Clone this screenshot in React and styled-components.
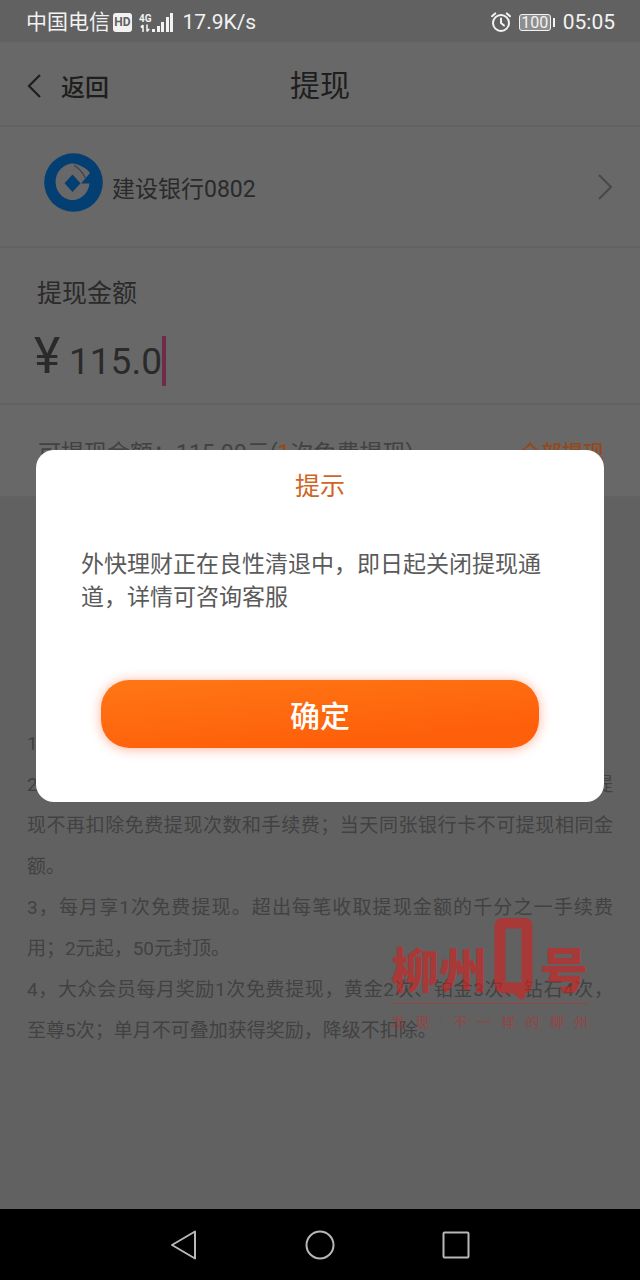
import React, { useState } from 'react'
import styled, { createGlobalStyle, ThemeProvider } from 'styled-components'

const theme = {
    statusBar: '#616161',
    surface: '#686868',
    page: '#616161',
    divider: '#626262',
    ink: '#1e1e1e',
    text: '#2a2a2a',
    muted: '#424242',
    orange: '#984718',
    caret: '#702c46',
    bankBlue: '#043f73',
    accent: '#d0651f',
    stamp: '#d72020',
}

const GlobalStyle = createGlobalStyle`
    * {
        box-sizing: border-box;
    }
    body {
        margin: 0;
        background: #000;
        font-family: Roboto, "Noto Sans CJK SC", sans-serif;
    }
    button, input {
        font-family: inherit;
        border: 0;
        padding: 0;
        background: none;
        outline: none;
    }
    h1, h2, p {
        margin: 0;
        font-weight: 400;
    }
`

const Screen = styled.div`
    min-height: 100vh;
    display: flex;
    flex-direction: column;
`

const StatusBar = styled.div`
    height: 42px;
    padding: 2px 25px 0 26px;
    display: flex;
    align-items: center;
    justify-content: space-between;
    background: ${props => props.theme.statusBar};
    color: #f2f2f2;
    font-size: 21px;
    line-height: 24px;
`

const StatusGroup = styled.div`
    display: flex;
    align-items: center;
    gap: ${props => props.$gap}px;
`

const HdBadge = styled.span`
    width: 19px;
    height: 19px;
    border-radius: 3px;
    background: #f2f2f2;
    color: ${props => props.theme.statusBar};
    font-size: 12px;
    font-weight: 700;
    line-height: 19px;
    text-align: center;
`

const Network = styled.span`
    display: flex;
    align-items: flex-end;
    margin-left: 4px;
`

const NetworkType = styled.span`
    display: flex;
    flex-direction: column;
    align-items: center;
    font-size: 10px;
    font-weight: 700;
    line-height: 10px;
`

const Speed = styled.span`
    margin-left: 6px;
`

const Battery = styled.span`
    display: flex;
    align-items: center;
    gap: 2px;

    &::after {
        content: '';
        width: 2px;
        height: 9px;
        background: #f2f2f2;
    }
`

const BatteryLevel = styled.span`
    width: 32px;
    height: 17px;
    border: 1px solid #f2f2f2;
    border-radius: 3px;
    background: #8e8e8e;
    font-size: 16px;
    line-height: 15px;
    text-align: center;
`

const Main = styled.main`
    position: relative;
    flex: 1;
    background: ${props => props.theme.page};
`

const Section = styled.section`
    background: ${props => props.theme.surface};
    border-bottom: 2px solid ${props => props.theme.divider};
`

const AppBar = styled.header`
    height: 85px;
    padding: 4px 27px 0;
    display: grid;
    grid-template-columns: 1fr auto 1fr;
    align-items: center;
    background: ${props => props.theme.surface};
    border-bottom: 2px solid ${props => props.theme.divider};
    color: ${props => props.theme.ink};
`

const BackButton = styled.button`
    display: flex;
    align-items: center;
    gap: 20px;
    color: inherit;
    font-size: 24px;
    font-weight: 500;
`

const PageTitle = styled.h1`
    font-size: 30px;
    line-height: 40px;
`

const BankRow = styled.button`
    width: 100%;
    height: 119px;
    padding: 0 27px 0 44px;
    display: flex;
    align-items: center;
    color: ${props => props.theme.text};
    font-size: 23px;
    text-align: left;
`

const BankLogo = styled.svg`
    flex: none;
    margin: 0 9px 9px 0;
`

const BankName = styled.span`
    flex: 1;
`

const AmountForm = styled.div`
    height: 155px;
    padding: 28px 34px 0;
    color: ${props => props.theme.text};
`

const AmountLabel = styled.label`
    display: block;
    padding-left: 3px;
    font-size: 25px;
    line-height: 36px;
`

const AmountLine = styled.div`
    display: flex;
    align-items: center;
    height: 50px;
    margin-top: 24px;
`

const Currency = styled.span`
    width: 35px;
    padding-bottom: 10px;
    font-size: 50px;
    line-height: 50px;
`

const AmountInput = styled.input`
    width: 93px;
    height: 50px;
    color: ${props => props.theme.text};
    font-size: 37px;
`

const Caret = styled.span`
    width: 4px;
    height: 50px;
    background: ${props => props.theme.caret};
`

const Available = styled.div`
    height: 91px;
    padding: 0 36px 0 38px;
    display: flex;
    align-items: center;
    justify-content: space-between;
    color: ${props => props.theme.muted};
    font-size: 23px;
`

const Highlight = styled.span`
    color: ${props => props.theme.orange};
`

const AllButton = styled.button`
    color: ${props => props.theme.orange};
    font-size: 21px;
    font-weight: 500;
`

const Rules = styled.div`
    padding: 225px 27px 120px;
    color: ${props => props.theme.muted};
    font-size: 19px;
    line-height: 41px;
`

const RuleLine = styled.p`
    text-align-last: ${props => props.$full ? 'justify' : 'left'};
`

const SplitLine = styled.p`
    display: flex;
    justify-content: space-between;
`

const Stamp = styled.div`
    position: absolute;
    right: 52px;
    bottom: 177px;
    width: 197px;
    color: ${props => props.theme.stamp};
    opacity: 0.6;
`

const StampName = styled.div`
    display: flex;
    align-items: flex-end;
    justify-content: space-between;
    font-size: 48px;
    font-weight: 900;
    line-height: 56px;
`

const StampSlogan = styled.div`
    display: flex;
    justify-content: space-between;
    margin-top: 3px;
    padding-top: 8px;
    border-top: 1px solid;
    font-size: 14px;
    line-height: 20px;
    opacity: 0.7;
`

const Backdrop = styled.div`
    position: absolute;
    inset: 0;
    padding: 0 36px;
    display: flex;
    align-items: center;
    justify-content: center;
`

const Dialog = styled.div`
    width: 100%;
    padding: 18px 45px 54px;
    border-radius: 18px;
    background: #fff;
`

const DialogTitle = styled.h2`
    color: ${props => props.theme.accent};
    font-size: 25px;
    line-height: 38px;
    text-align: center;
`

const DialogText = styled.p`
    margin: 42px 0 66px;
    color: #5a5a5a;
    font-size: 23px;
    line-height: 33px;
`

const ConfirmButton = styled.button`
    display: block;
    width: calc(100% - 40px);
    height: 68px;
    margin: 0 auto;
    border-radius: 28px;
    background: linear-gradient(175deg, #ff7414 10%, #fe5f0a 80%);
    box-shadow: 0 1px 12px rgba(255, 80, 30, 0.45);
    color: #fff;
    font-size: 30px;
    font-weight: 500;
`

const NavBar = styled.nav`
    height: 71px;
    flex: none;
    display: flex;
    align-items: center;
    justify-content: center;
    gap: 80px;
    background: #000;
`

const NavButton = styled.button`
    width: 56px;
    height: 48px;
    display: flex;
    align-items: center;
    justify-content: center;
`

function SignalIcon() {
    return (
        <svg width="22" height="21" viewBox="0 0 22 21" fill="#f2f2f2" aria-hidden="true">
            <rect x="0" y="17" width="3" height="3" />
            <rect x="5" y="14" width="3" height="6" />
            <rect x="9" y="10" width="3" height="10" />
            <rect x="14" y="5" width="3" height="15" />
            <rect x="18" y="1" width="3" height="19" />
        </svg>
    )
}

function DataArrows() {
    return (
        <svg width="10" height="9" viewBox="0 0 10 9" fill="none" stroke="#f2f2f2" strokeWidth="1.6" aria-hidden="true">
            <path d="M3 8V1M3 1L0.8 3.4M7 0.5V7.5M7 7.5L9.2 5" />
        </svg>
    )
}

function AlarmIcon() {
    return (
        <svg width="20" height="20" viewBox="0 0 20 20" fill="none" stroke="#f2f2f2" strokeWidth="2" strokeLinecap="round" aria-hidden="true">
            <circle cx="10" cy="11" r="8" />
            <path d="M10 6.5V11L13 13.5" strokeLinejoin="round" />
            <path d="M1 4.2L4.2 1.4M19 4.2L15.8 1.4" />
        </svg>
    )
}

function BankIcon() {
    return (
        <BankLogo width="59" height="59" viewBox="0 0 59 59" aria-hidden="true">
            <circle cx="29.5" cy="29.5" r="29.3" fill={theme.bankBlue} />
            <path
                d="M45.5 30.5A17 18.2 0 1 1 37 13Q43 15.5 46 20L37 30.5Z"
                fill={theme.surface}
            />
            <path d="M28.5 21.5L36.5 30.2L28.5 39L20.5 30.2Z" fill={theme.bankBlue} />
            <path d="M30 12.5Q36 15 41.5 25" fill="none" stroke="#3a3f44" strokeWidth="1.2" />
        </BankLogo>
    )
}

function Status() {
    return (
        <StatusBar>
            <StatusGroup $gap={3}>
                <span>中国电信</span>
                <HdBadge>HD</HdBadge>
                <Network>
                    <NetworkType>
                        4G
                        <DataArrows />
                    </NetworkType>
                    <SignalIcon />
                </Network>
                <Speed>17.9K/s</Speed>
            </StatusGroup>
            <StatusGroup $gap={8}>
                <AlarmIcon />
                <Battery>
                    <BatteryLevel>100</BatteryLevel>
                </Battery>
                <span>05:05</span>
            </StatusGroup>
        </StatusBar>
    )
}

function WithdrawForm() {
    const [amount, setAmount] = useState('115.0')

    return (
        <>
            <Section>
                <AmountForm>
                    <AmountLabel htmlFor="amount">提现金额</AmountLabel>
                    <AmountLine>
                        <Currency>¥</Currency>
                        <AmountInput
                            id="amount"
                            inputMode="decimal"
                            value={amount}
                            onChange={e => setAmount(e.target.value)}
                        />
                        <Caret />
                    </AmountLine>
                </AmountForm>
            </Section>
            <Section>
                <Available>
                    <span>可提现金额：115.00元(<Highlight>1</Highlight>次免费提现)</span>
                    <AllButton type="button">全部提现</AllButton>
                </Available>
            </Section>
        </>
    )
}

function WithdrawRules() {
    return (
        <Rules>
            <RuleLine>1，</RuleLine>
            <SplitLine><span>2，</span><span>提</span></SplitLine>
            <RuleLine $full>现不再扣除免费提现次数和手续费；当天同张银行卡不可提现相同金</RuleLine>
            <RuleLine>额。</RuleLine>
            <RuleLine $full>3，每月享1次免费提现。超出每笔收取提现金额的千分之一手续费</RuleLine>
            <RuleLine>用；2元起，50元封顶。</RuleLine>
            <RuleLine $full>4，大众会员每月奖励1次免费提现，黄金2次、铂金3次、钻石4次，</RuleLine>
            <RuleLine>至尊5次；单月不可叠加获得奖励，降级不扣除。</RuleLine>
        </Rules>
    )
}

function LiuzhouStamp() {
    return (
        <Stamp>
            <StampName>
                <span>柳州</span>
                <svg width="40" height="82" viewBox="0 0 40 82" fill="none" stroke="currentColor" aria-label="Q">
                    <rect x="6" y="5" width="27" height="65" rx="3" strokeWidth="11" />
                    <path d="M19 70L30 80" strokeWidth="7" />
                </svg>
                <span>号</span>
            </StampName>
            <StampSlogan>
                {[...'发现·不一样的柳州'].map((char, i) => <span key={i}>{char}</span>)}
            </StampSlogan>
        </Stamp>
    )
}

function Notice({ onClose }) {
    return (
        <Backdrop>
            <Dialog role="dialog" aria-modal="true" aria-labelledby="notice-title">
                <DialogTitle id="notice-title">提示</DialogTitle>
                <DialogText>外快理财正在良性清退中，即日起关闭提现通道，详情可咨询客服</DialogText>
                <ConfirmButton type="button" onClick={onClose}>确定</ConfirmButton>
            </Dialog>
        </Backdrop>
    )
}

function SystemNav() {
    const stroke = { fill: 'none', stroke: '#b8b8b8', strokeWidth: 2, strokeLinejoin: 'round' }

    return (
        <NavBar>
            <NavButton type="button" aria-label="返回">
                <svg width="30" height="30" viewBox="0 0 30 30" {...stroke}>
                    <path d="M3 15L26 1.5V28.5Z" />
                </svg>
            </NavButton>
            <NavButton type="button" aria-label="主页">
                <svg width="30" height="30" viewBox="0 0 30 30" {...stroke}>
                    <circle cx="15" cy="15" r="13.5" />
                </svg>
            </NavButton>
            <NavButton type="button" aria-label="最近任务">
                <svg width="30" height="30" viewBox="0 0 30 30" {...stroke}>
                    <rect x="2.5" y="2.5" width="25" height="25" rx="1" />
                </svg>
            </NavButton>
        </NavBar>
    )
}

function App() {
    const [noticeOpen, setNoticeOpen] = useState(true)

    return (
        <ThemeProvider theme={theme}>
            <GlobalStyle />
            <Screen>
                <Status />
                <Main>
                    <AppBar>
                        <BackButton type="button">
                            <svg width="14" height="24" viewBox="0 0 14 24" fill="none" stroke="currentColor" strokeWidth="2.2" aria-hidden="true">
                                <path d="M13 1L2 12L13 23" />
                            </svg>
                            返回
                        </BackButton>
                        <PageTitle>提现</PageTitle>
                    </AppBar>
                    <Section>
                        <BankRow type="button">
                            <BankIcon />
                            <BankName>建设银行0802</BankName>
                            <svg width="16" height="28" viewBox="0 0 16 28" fill="none" stroke="#484848" strokeWidth="2" aria-hidden="true">
                                <path d="M2 2L14 14L2 26" />
                            </svg>
                        </BankRow>
                    </Section>
                    <WithdrawForm />
                    <WithdrawRules />
                    <LiuzhouStamp />
                    {noticeOpen && <Notice onClose={() => setNoticeOpen(false)} />}
                </Main>
                <SystemNav />
            </Screen>
        </ThemeProvider>
    )
}

export default App
